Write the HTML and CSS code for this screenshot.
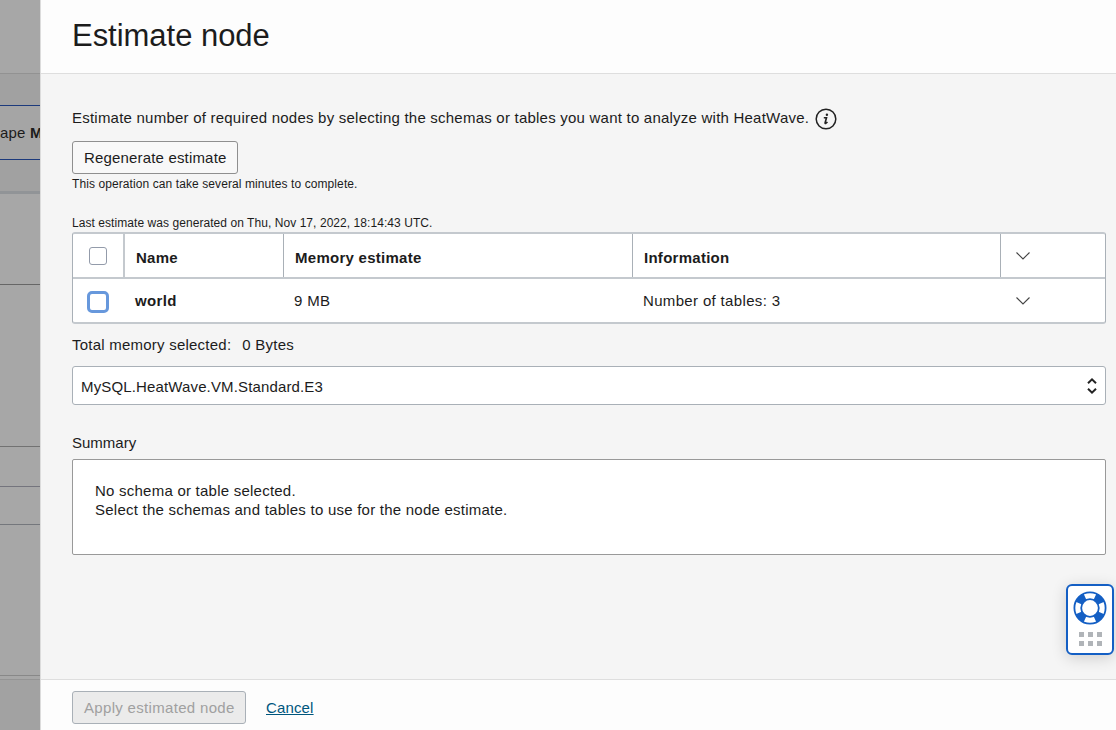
FILE: index.html
```html
<!DOCTYPE html>
<html lang="en">
<head>
<meta charset="utf-8">
<title>Estimate node</title>
<link rel="stylesheet" href="styles.css">
</head>
<body>
<div class="screen">
  <aside class="backdrop">
    <div class="strip strip-top"></div>
    <div class="strip strip-gap"></div>
    <div class="strip strip-shape"><span>ape <b>M</b></span></div>
    <div class="strip strip-tabs"></div>
    <div class="strip strip-a"></div>
    <div class="strip strip-b"></div>
    <div class="strip strip-c"></div>
    <div class="strip strip-d"></div>
    <div class="strip strip-e"></div>
    <div class="strip strip-f"></div>
    <div class="strip strip-end"></div>
  </aside>
  <main class="panel">
    <header class="panel-header"><h1><span class="t">Estimate node</span></h1></header>
    <section class="content">
      <div class="intro">
        <span class="t intro-text">Estimate number of required nodes by selecting the schemas or tables you want to analyze with HeatWave.</span>
        <svg class="info" viewBox="0 0 22 22" width="22" height="22"><circle cx="11" cy="11" r="9.8" fill="none" stroke="#222" stroke-width="1.5"/><circle cx="11.9" cy="6.7" r="1.2" fill="#222"/><path d="M8.800 9.700h2.700L10.100 14.700q-.2 1 .7.700.8-.4 1.600-1.500" fill="none" stroke="#222" stroke-width="1.600"/></svg>
      </div>
      <button class="button regenerate"><span class="t">Regenerate estimate</span></button>
      <p class="note"><span class="t">This operation can take several minutes to complete.</span></p>
      <p class="stamp"><span class="t">Last estimate was generated on Thu, Nov 17, 2022, 18:14:43 UTC.</span></p>
      <div class="table">
        <div class="row head">
          <div class="cell check"><span class="box"></span></div>
          <div class="cell"><span class="t">Name</span></div>
          <div class="cell"><span class="t">Memory estimate</span></div>
          <div class="cell"><span class="t">Information</span></div>
          <div class="cell toggle"><svg width="16" height="10" viewBox="0 0 16 10"><path d="M1.500 1.500 8 8l6.500-6.500"/></svg></div>
        </div>
        <div class="row data">
          <div class="cell check"><span class="box focused"></span></div>
          <div class="cell"><b class="t">world</b></div>
          <div class="cell"><span class="t">9 MB</span></div>
          <div class="cell"><span class="t tables">Number of tables: 3</span></div>
          <div class="cell toggle"><svg width="16" height="10" viewBox="0 0 16 10"><path d="M1.500 1.500 8 8l6.500-6.500"/></svg></div>
        </div>
      </div>
      <p class="total"><span class="t">Total memory selected:</span><span class="t">0 Bytes</span></p>
      <div class="select">
        <span class="t">MySQL.HeatWave.VM.Standard.E3</span>
        <svg width="12" height="18" viewBox="0 0 12 18"><path d="M2 6.200 6 2.300l4 3.900M2 11.800l4 3.900 4-3.900"/></svg>
      </div>
      <h2><span class="t">Summary</span></h2>
      <div class="summary">
        <p><span class="t">No schema or table selected.</span></p>
        <p><span class="t">Select the schemas and tables to use for the node estimate.</span></p>
      </div>
    </section>
    <footer class="panel-footer">
      <button class="button apply" disabled><span class="t">Apply estimated node</span></button>
      <a class="cancel" href="#"><span class="t">Cancel</span></a>
    </footer>
  </main>
  <div class="help">
    <svg width="34" height="34" viewBox="0 0 34 34">
      <circle class="spokes" cx="17" cy="17" r="12.200" pathLength="360"/>
      <circle class="ring" cx="17" cy="17" r="15.600"/>
      <circle class="ring" cx="17" cy="17" r="8.800"/>
    </svg>
    <div class="grip"><i></i><i></i><i></i><i></i><i></i><i></i></div>
  </div>
</div>
</body>
</html>
```
FILE: styles.css
```css
* { box-sizing: border-box; }
body { margin: 0; font-family: "Liberation Sans", Arial, sans-serif; font-size: 15px; color: #1c1c1c; }
p, h1, h2 { margin: 0; font-weight: 400; }
.t { white-space: nowrap; }
.screen { position: relative; display: flex; width: 1116px; height: 730px; overflow: hidden; }

.backdrop { width: 40px; flex: none; display: flex; flex-direction: column; background: #a7a7a7; overflow: hidden; }
.strip { flex: none; border-bottom: 1px solid #666; }
.strip-top { height: 74px; border-color: #929292; }
.strip-gap { height: 32px; background: #a1a1a1; border-color: #1c3a7c; }
.strip-shape { height: 54px; padding-top: 18px; line-height: 18px; white-space: nowrap; border-color: #1c3a7c; background: #a5a5a5; letter-spacing: .2px; }
.strip-tabs { height: 34px; background: #a1a1a1; border-bottom: 3px solid #919497; }
.strip-a { height: 91px; }
.strip-b { height: 162px; border-color: #727272; }
.strip-c { height: 40px; border-color: #74747d; }
.strip-d { height: 38px; border-color: #74777c; }
.strip-e { height: 151px; border-color: #888; }
.strip-f { height: 4px; border-color: #949494; }
.strip-end { flex: 1; border: 0; background: #a2a2a2; }

.panel { flex: 1; display: flex; flex-direction: column; background: #f5f5f5; border-left: 1px solid #dcdcdc; }
.panel-header { height: 74px; padding: 18px 31px 0; background: #fdfdfd; border-bottom: 1px solid #dedede; }
h1 { font-size: 31px; line-height: 36px; letter-spacing: -.03px; }
.content { flex: 1; padding: 34px 10px 0 31px; }
.intro { height: 22px; display: flex; align-items: center; gap: 6px; line-height: 20px; letter-spacing: .225px; }
.intro-text { width: 737px; margin-top: -2px; }
.info { flex: none; }
.button { display: block; height: 33px; padding: 0 0 0 11px; border: 1px solid #8f8f8f; border-radius: 3px; background: #f8f8f8; font: inherit; line-height: 31px; color: inherit; text-align: left; }
.regenerate { width: 166px; margin-top: 11px; letter-spacing: .17px; }
.note { font-size: 12px; line-height: 18px; margin-top: 1px; letter-spacing: .09px; }
.stamp { font-size: 12px; line-height: 18px; margin: 21px 0 1px; letter-spacing: .06px; }

.table { border: 1px solid #a9b0b7; border-top: 2px solid #c4c9ce; border-bottom: 2px solid #c4c9ce; border-radius: 3px; background: #fff; height: 92px; margin-top: -1px; }
.row { display: grid; grid-template-columns: 52px 159px 349px 368px 1fr; height: 45px; }
.head { font-weight: 700; border-bottom: 2px solid #c4c9ce; letter-spacing: .27px; }
.data { height: 43px; letter-spacing: .34px; }
.cell { display: flex; align-items: center; padding-left: 11px; }
.head .cell { border-right: 1px solid #a9b0b7; padding-top: 3px; }
.head .check { border-right: 2px solid #c4c9ce; padding-top: 1px; }
.head .toggle { border-right: 0; padding-top: 0; }
.data .cell { padding-left: 10px; }
.row .check { padding-left: 16px; }
.data .check { padding-left: 14px; }
.row .toggle { padding-left: 14px; }
.data .toggle { padding-top: 1px; }
.toggle svg { fill: none; stroke: #444; stroke-width: 1.1; }
.box { width: 18px; height: 18px; border: 1px solid #939baa; border-radius: 3px; background: #fff; }
.focused { width: 22px; height: 22px; border: 3px solid #6798dc; border-radius: 5px; margin-top: 2px; }

.total { display: flex; gap: 11px; line-height: 20px; margin-top: 11px; letter-spacing: .23px; }
.select { margin-top: 11px; height: 39px; border: 1px solid #a9b0b7; border-radius: 3px; background: #fff; display: flex; align-items: center; justify-content: space-between; padding: 1px 7px 0 8px; letter-spacing: .14px; }
.select svg { fill: none; stroke: #222; stroke-width: 2; }
h2 { font-size: 15px; line-height: 20px; margin-top: 28px; }
.summary { margin-top: 6px; height: 96px; border: 1px solid #999; border-radius: 2px; background: #fff; padding: 22px; line-height: 18.5px; letter-spacing: .235px; }

.panel-footer { height: 51px; flex: none; border-top: 1px solid #dedede; background: #fdfdfd; padding: 11px 31px 0; display: flex; gap: 20px; }
.apply { width: 174px; background: #ebebeb; border-color: #a9b0b7; color: #a0a0a0; letter-spacing: .32px; }
.cancel { color: #00567d; line-height: 33px; text-underline-offset: 1px; letter-spacing: .15px; }

.help { position: absolute; left: 1066px; top: 584px; width: 48px; height: 71px; border: 2px solid #145fc4; border-radius: 6px; background: #fff; display: flex; flex-direction: column; align-items: center; padding-top: 5px; box-shadow: 0 3px 15px rgba(0, 0, 0, .16); }
.help svg { flex: none; }
.ring { fill: none; stroke: #145fc4; stroke-width: 1.8; }
.spokes { fill: none; stroke: #145fc4; stroke-width: 7; stroke-dasharray: 42 48; stroke-dashoffset: -24; }
.grip { display: grid; grid-template-columns: repeat(3, 5px); gap: 4px; margin-top: 7px; }
.grip i { height: 5px; background: #b0b4b8; }
```
